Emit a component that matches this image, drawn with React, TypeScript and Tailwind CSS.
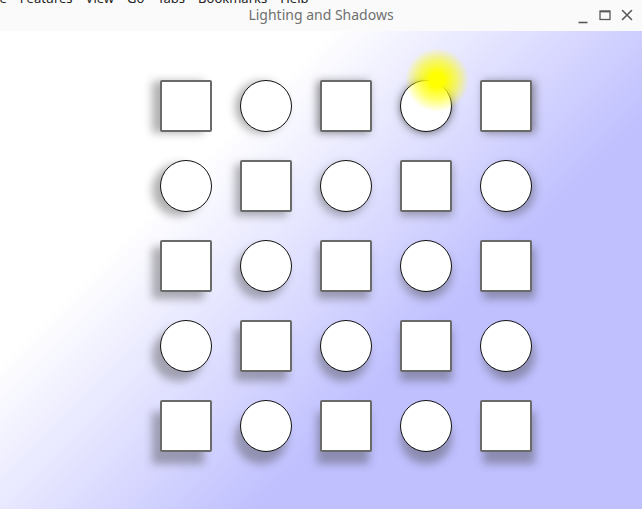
import React from 'react';

// light source top-left in scene coords (its centre sits 40px further in)
const LIGHT = { x: 76, y: -201 };
const STEPS = [-2, -1, 0, 1, 2];

type Cell = { key: string; round: boolean; shadow: string };

const cells: Cell[] = STEPS.flatMap((j) =>
  STEPS.map((i) => {
    const dx = i * 80 - LIGHT.x;
    const dy = j * 80 - LIGHT.y;
    const ox = Math.round(dx / 30);
    const oy = Math.round(dy / 30);
    const dd = Math.sqrt(dx * dx + dy * dy);
    const alpha = Math.min(0.7, Math.max(0.4, 1 - dd / 200));
    return {
      key: `${i}-${j}`,
      round: ((i + j) & 1) === 1,
      shadow: `${ox}px ${oy}px 8px rgba(63,63,63,${alpha.toFixed(2)})`,
    };
  })
);

function WindowButtons() {
  return (
    <div className="flex items-center justify-end gap-[10px] pr-[9px] text-[#5a5a5a]">
      <svg width="12" height="12" viewBox="0 0 12 12" className="mt-[6px]">
        <path d="M1.5 10.5h9" stroke="currentColor" strokeWidth="1.6" />
      </svg>
      <svg width="12" height="12" viewBox="0 0 12 12">
        <rect x="1" y="2" width="10" height="8.5" fill="none" stroke="currentColor" strokeWidth="1.3" />
        <path d="M1 2.6h10" stroke="currentColor" strokeWidth="1.6" />
      </svg>
      <svg width="12" height="12" viewBox="0 0 12 12">
        <path d="M1.5 1.5l9 9M10.5 1.5l-9 9" stroke="currentColor" strokeWidth="1.6" strokeLinecap="round" />
      </svg>
    </div>
  );
}

export default function App() {
  return (
    <div className="w-[642px] h-[509px] flex flex-col overflow-hidden bg-[#fafafa] font-['Noto_Sans','Open_Sans',sans-serif]">
      {/* menu of the window behind, only its bottom edge peeks out */}
      <div className="h-[3px] overflow-hidden">
        <div className="-mt-[9px] flex gap-[13px] text-[13px] leading-[15px] text-[#222] whitespace-nowrap">
          <span className="-ml-[14px]">File</span>
          <span>Features</span>
          <span>View</span>
          <span>Go</span>
          <span>Tabs</span>
          <span>Bookmarks</span>
          <span>Help</span>
        </div>
      </div>

      {/* title bar */}
      <div className="h-[28px] grid grid-cols-[1fr_auto_1fr] items-center pb-[4px]">
        <div />
        <div className="text-[14px] leading-[18px] text-[#707070]">Lighting and Shadows</div>
        <WindowButtons />
      </div>

      {/* scene */}
      <div className="relative flex-1 bg-[linear-gradient(135deg,#ffffff_234px,#c0c0ff_517px)] pl-[160px] pt-[49px]">
        <div className="grid grid-cols-[repeat(5,52px)] auto-rows-[52px] gap-[28px]">
          {cells.map((c) =>
            c.round ? (
              <div
                key={c.key}
                className="w-[52px] h-[52px] rounded-full border border-[#111] bg-white"
                style={{ boxShadow: c.shadow }}
              />
            ) : (
              <div
                key={c.key}
                className="w-[52px] h-[52px] rounded-[2px] border-2 border-[#6a6a6a] bg-white"
                style={{ boxShadow: c.shadow }}
              />
            )
          )}
        </div>

        {/* light source glow */}
        <div className="absolute left-[397px] top-[9px] w-[80px] h-[80px] rounded-full bg-[radial-gradient(circle,#ffff00_7px,rgba(255,255,0,0.55)_20px,rgba(255,255,0,0)_32px)]" />
      </div>
    </div>
  );
}
